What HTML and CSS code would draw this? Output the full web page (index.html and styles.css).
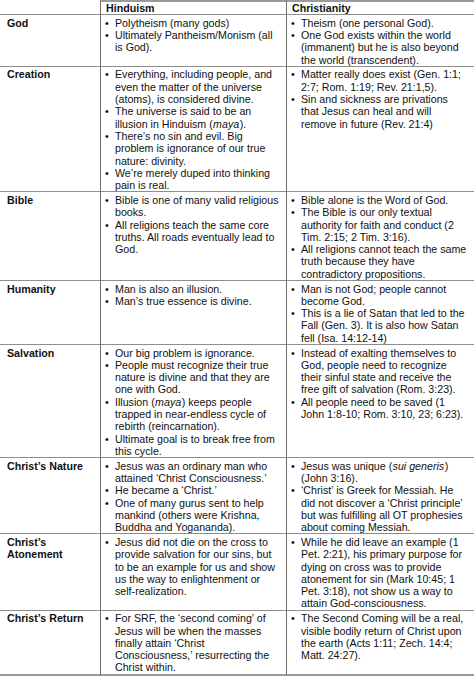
FILE: index.html
```html
<!DOCTYPE html>
<html lang="en">
<head>
<meta charset="utf-8">
<title>Hinduism vs Christianity</title>
<link rel="stylesheet" href="styles.css">
</head>
<body>
<div class="compare">
  <div class="cell corner"></div>
  <div class="cell head">Hinduism</div>
  <div class="cell head">Christianity</div>

  <div class="cell label">God</div>
  <div class="cell col"><ul class="bullets">
    <li>Polytheism (many gods)</li>
    <li>Ultimately Pantheism/Monism (all is God).</li>
  </ul></div>
  <div class="cell col last"><ul class="bullets">
    <li>Theism (one personal God).</li>
    <li>One God exists within the world (immanent) but he is also beyond the world (transcendent).</li>
  </ul></div>

  <div class="cell label">Creation</div>
  <div class="cell col"><ul class="bullets">
    <li>Everything, including people, and even the matter of the universe (atoms), is considered divine.</li>
    <li>The universe is said to be an illusion in Hinduism (<em>maya</em>).</li>
    <li>There’s no sin and evil. Big problem is ignorance of our true nature: divinity.</li>
    <li>We’re merely duped into thinking pain is real.</li>
  </ul></div>
  <div class="cell col last"><ul class="bullets">
    <li>Matter really does exist (Gen. 1:1; 2:7; Rom. 1:19; Rev. 21:1,5).</li>
    <li>Sin and sickness are privations that Jesus can heal and will remove in future (Rev. 21:4)</li>
  </ul></div>

  <div class="cell label">Bible</div>
  <div class="cell col"><ul class="bullets">
    <li>Bible is one of many valid religious books.</li>
    <li>All religions teach the same core truths. All roads eventually lead to God.</li>
  </ul></div>
  <div class="cell col last"><ul class="bullets">
    <li>Bible alone is the Word of God.</li>
    <li>The Bible is our only textual authority for faith and conduct (2 Tim. 2:15; 2 Tim. 3:16).</li>
    <li>All religions cannot teach the same truth because they have contradictory propositions.</li>
  </ul></div>

  <div class="cell label">Humanity</div>
  <div class="cell col"><ul class="bullets">
    <li>Man is also an illusion.</li>
    <li>Man’s true essence is divine.</li>
  </ul></div>
  <div class="cell col last"><ul class="bullets">
    <li>Man is not God; people cannot become God.</li>
    <li>This is a lie of Satan that led to the Fall (Gen. 3). It is also how Satan fell (Isa. 14:12-14)</li>
  </ul></div>

  <div class="cell label">Salvation</div>
  <div class="cell col"><ul class="bullets">
    <li>Our big problem is ignorance.</li>
    <li>People must recognize their true nature is divine and that they are one with God.</li>
    <li>Illusion (<em>maya</em>) keeps people trapped in near-endless cycle of rebirth (reincarnation).</li>
    <li>Ultimate goal is to break free from this cycle.</li>
  </ul></div>
  <div class="cell col last"><ul class="bullets">
    <li>Instead of exalting themselves to God, people need to recognize their sinful state and receive the free gift of salvation (Rom. 3:23).</li>
    <li>All people need to be saved (1 John 1:8-10; Rom. 3:10, 23; 6:23).</li>
  </ul></div>

  <div class="cell label">Christ’s Nature</div>
  <div class="cell col"><ul class="bullets">
    <li>Jesus was an ordinary man who attained ‘Christ Consciousness.’</li>
    <li>He became a ‘Christ.’</li>
    <li>One of many gurus sent to help mankind (others were Krishna, Buddha and Yogananda).</li>
  </ul></div>
  <div class="cell col last"><ul class="bullets">
    <li>Jesus was unique (<em>sui generis</em>) (John 3:16).</li>
    <li>‘Christ’ is Greek for Messiah. He did not discover a ‘Christ principle’ but was fulfilling all OT prophesies about coming Messiah.</li>
  </ul></div>

  <div class="cell label">Christ’s Atonement</div>
  <div class="cell col"><ul class="bullets">
    <li>Jesus did not die on the cross to provide salvation for our sins, but to be an example for us and show us the way to enlightenment or self-realization.</li>
  </ul></div>
  <div class="cell col last"><ul class="bullets">
    <li>While he did leave an example (1 Pet. 2:21), his primary purpose for dying on cross was to provide atonement for sin (Mark 10:45; 1 Pet. 3:18), not show us a way to attain God-consciousness.</li>
  </ul></div>

  <div class="cell label final">Christ’s Return</div>
  <div class="cell col final"><ul class="bullets">
    <li>For SRF, the ‘second coming’ of Jesus will be when the masses finally attain ‘Christ Consciousness,’ resurrecting the Christ within.</li>
  </ul></div>
  <div class="cell col last final"><ul class="bullets">
    <li>The Second Coming will be a real, visible bodily return of Christ upon the earth (Acts 1:11; Zech. 14:4; Matt. 24:27).</li>
  </ul></div>
</div>
</body>
</html>
```

FILE: styles.css
```css
html, body {
  margin: 0;
  padding: 0;
  background: #ffffff;
}

body {
  font-family: "Liberation Sans", Arial, sans-serif;
  font-size: 10.67px;
  line-height: 12.3px;
  color: #111111;
  overflow: hidden;
}

.compare {
  display: grid;
  grid-template-columns: 100px 186px 188px;
  width: 474px;
}

.cell {
  border-bottom: 1px solid #8e8e8e;
  padding-top: 1.5px;
}

.corner {
  padding-top: 0;
}

.head {
  border-top: 2px solid #9a9a9a;
  border-left: 1px solid #6e6e6e;
  padding: 0 4px 0 5px;
  font-weight: bold;
}

.label {
  padding-left: 7px;
  padding-right: 4px;
  font-weight: bold;
}

.col {
  border-left: 1px solid #6e6e6e;
  padding-left: 4px;
  padding-right: 4.5px;
}

.col.last {
  padding-right: 6.5px;
}

.final {
  border-bottom: 2px solid #9a9a9a;
}

.bullets {
  list-style: none;
  margin: 0;
  padding: 0;
}

.bullets li {
  padding-left: 10px;
  text-indent: -10px;
}

.bullets li::before {
  content: "•";
  display: inline-block;
  width: 10px;
  text-indent: 0;
}

em {
  font-style: italic;
  margin: 0 0.6px 0 0.4px;
}
```
